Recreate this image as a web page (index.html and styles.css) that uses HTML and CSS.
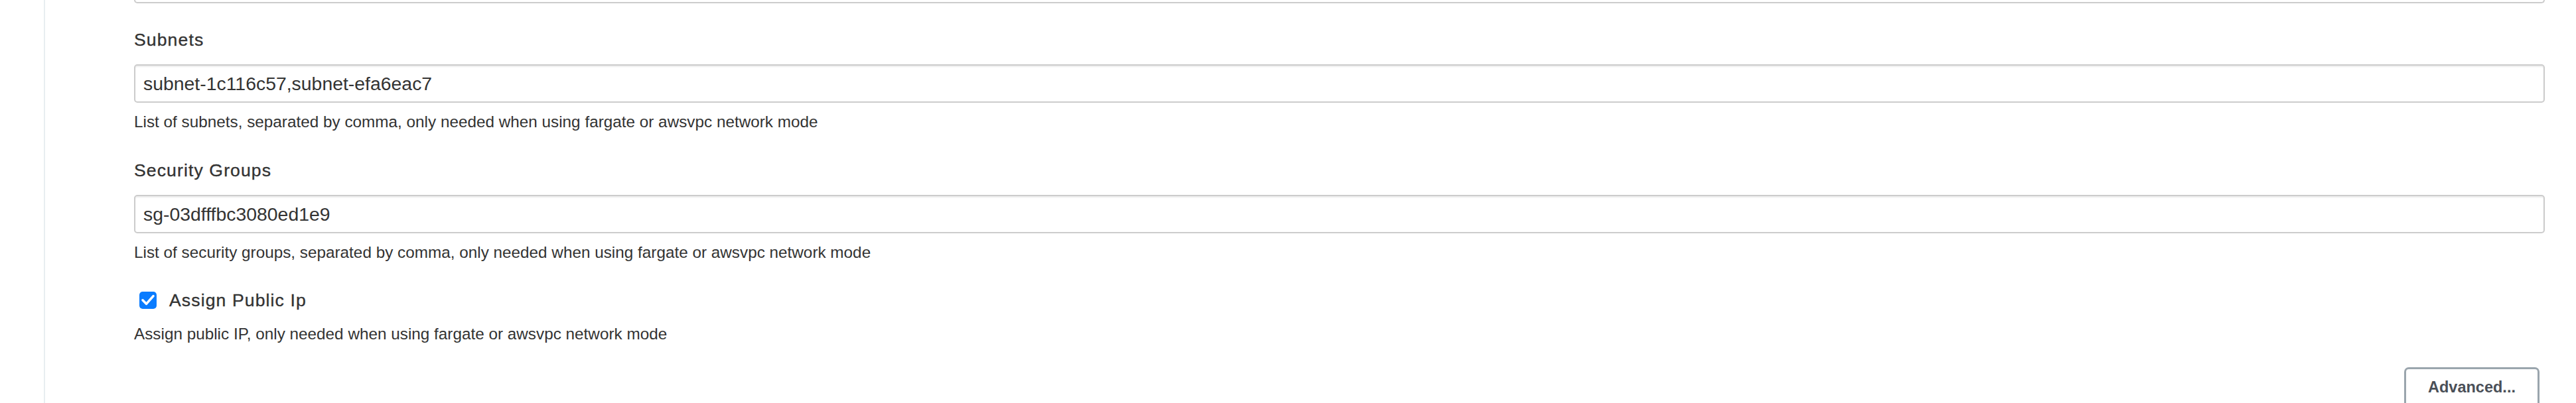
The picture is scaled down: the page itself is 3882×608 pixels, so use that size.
FILE: index.html
```html
<!DOCTYPE html>
<html lang="en">
<head>
<meta charset="utf-8">
<title>ECS agent template</title>
<link rel="stylesheet" href="styles.css">
</head>
<body>
<div class="layout">
  <aside class="sidebar"></aside>
  <main class="main">
    <div class="prev-input"></div>

    <div class="field">
      <div class="label">Subnets</div>
      <input class="text-input" type="text" value="subnet-1c116c57,subnet-efa6eac7">
      <div class="help">List of subnets, separated by comma, only needed when using fargate or awsvpc network mode</div>
    </div>

    <div class="field">
      <div class="label">Security Groups</div>
      <input class="text-input" type="text" value="sg-03dfffbc3080ed1e9">
      <div class="help">List of security groups, separated by comma, only needed when using fargate or awsvpc network mode</div>
    </div>

    <div class="field field-check">
      <label class="check-row">
        <span class="checkbox">
          <svg viewBox="0 0 26 26" width="26" height="26"><path d="M5 12.8 L10.6 18.4 L21 6.6" fill="none" stroke="#fff" stroke-width="3.6" stroke-linecap="round" stroke-linejoin="round"/></svg>
        </span>
        <span class="label check-label">Assign Public Ip</span>
      </label>
      <div class="help help-check">Assign public IP, only needed when using fargate or awsvpc network mode</div>
    </div>

    <div class="actions">
      <button class="btn" type="button">Advanced...</button>
    </div>
  </main>
</div>
</body>
</html>
```

FILE: styles.css
```css
html, body {
  margin: 0;
  padding: 0;
  background: #ffffff;
  overflow: hidden;
}

body {
  font-family: "Liberation Sans", Arial, Helvetica, sans-serif;
  color: #333333;
}

.layout {
  display: flex;
  min-height: 100vh;
}

.sidebar {
  width: 66px;
  flex: 0 0 66px;
  border-right: 2px solid #e8eef1;
}

.main {
  flex: 1;
  padding: 0 47px 0 134px;
  display: flex;
  flex-direction: column;
}

.prev-input {
  height: 5px;
  box-sizing: border-box;
  border: 2px solid #cccccc;
  border-top: 0;
  border-radius: 0 0 5px 5px;
}

.field {
  display: flex;
  flex-direction: column;
  margin-top: 38px;
}

.field + .field {
  margin-top: 41px;
}

.label {
  font-size: 26.6px;
  line-height: 34px;
  letter-spacing: 1.1px;
  color: #333333;
  -webkit-text-stroke: 0.35px #333333;
}

.text-input {
  margin-top: 20px;
  height: 58px;
  box-sizing: border-box;
  width: 100%;
  border: 2px solid #cccccc;
  border-radius: 5px;
  padding: 0 12px;
  font-family: "Liberation Sans", Arial, Helvetica, sans-serif;
  font-size: 28.4px;
  color: #333333;
  background: #ffffff;
  box-shadow: inset 0 2px 2px rgba(0, 0, 0, 0.075);
  outline: none;
}

.help {
  margin-top: 14px;
  font-size: 24.3px;
  line-height: 30px;
  color: #333333;
}

.field-check {
  margin-top: 40px;
}

.field + .field-check {
  margin-top: 40px;
}

.check-row {
  display: flex;
  align-items: center;
  gap: 19px;
  height: 34px;
  padding-left: 8px;
}

.checkbox {
  width: 26px;
  height: 26px;
  flex: 0 0 26px;
  border-radius: 5px;
  background: #0a7cff;
  display: flex;
}

.checkbox svg {
  display: block;
}

.help-check {
  margin-top: 19px;
}

.actions {
  display: flex;
  justify-content: flex-end;
  margin-top: 35px;
  padding-right: 8px;
}

.btn {
  width: 204px;
  height: 62px;
  box-sizing: border-box;
  border: 3px solid #9aa5ad;
  border-radius: 7px;
  background: #ffffff;
  padding: 14px 0 0;
  font-family: "Liberation Sans", Arial, Helvetica, sans-serif;
  font-weight: 700;
  font-size: 23.5px;
  line-height: 27px;
  color: #4a4f57;
  text-align: center;
  display: flex;
  justify-content: center;
  align-items: flex-start;
}
```
